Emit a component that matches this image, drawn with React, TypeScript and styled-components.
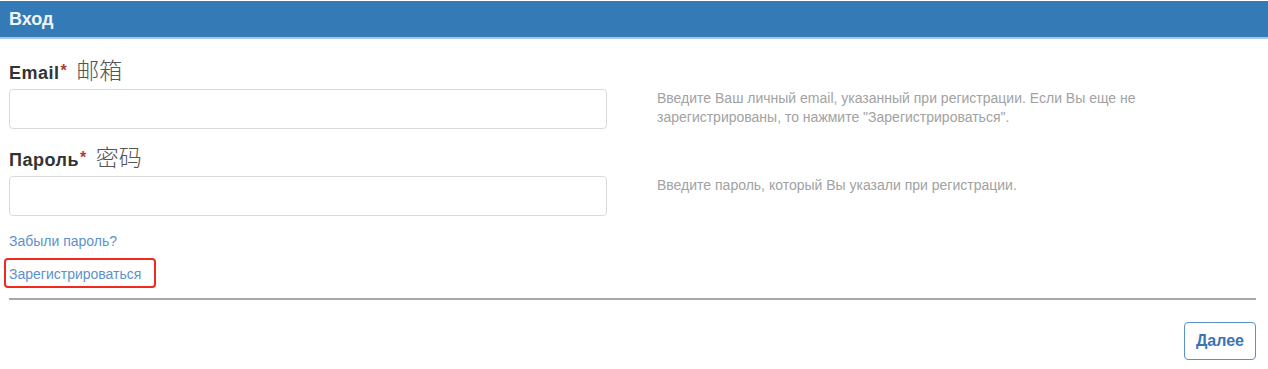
import React from "react";
import styled, { createGlobalStyle } from "styled-components";

const GlobalStyle = createGlobalStyle`
  html, body {
    margin: 0;
    padding: 0;
    background: #ffffff;
    font-family: "Liberation Sans", Arial, sans-serif;
  }
`;

const Page = styled.div`
  width: 1268px;
  height: 369px;
  padding-top: 1px;
  box-sizing: border-box;
  background: #fff;
`;

const Header = styled.div`
  height: 36px;
  background-color: #337ab7;
  border-bottom: 2px solid #a9c8e6;
  display: flex;
  align-items: center;
  padding: 0 9px;
`;

const HeaderTitle = styled.h2`
  margin: 0;
  color: #eef4fa;
  font-size: 18px;
  font-weight: 700;
  line-height: 20px;
`;

const Body = styled.div`
  padding: 20px 12px 0 9px;
`;

const FieldRow = styled.div<{ spacing?: string }>`
  display: grid;
  grid-template-columns: 598px 1fr;
  column-gap: 50px;
  margin-bottom: ${(props) => props.spacing || "0"};
`;

const FieldColumn = styled.div`
  display: flex;
  flex-direction: column;
`;

const Label = styled.label`
  display: block;
  height: 30px;
  line-height: 28px;
  color: #333;
  font-size: 18px;
  font-weight: 700;
  letter-spacing: 0.5px;
  white-space: nowrap;
`;

const Required = styled.span`
  color: #b23b37;
  font-size: 16px;
  line-height: 0;
  vertical-align: 3px;
  margin-left: 1px;
`;

const Translation = styled.span`
  margin-left: 9px;
  color: #555;
  font-family: "Noto Sans CJK SC", sans-serif;
  font-size: 23px;
  font-weight: 300;
  letter-spacing: 0;
  line-height: 0;
`;

const Input = styled.input`
  height: 40px;
  box-sizing: border-box;
  border: 1px solid #dadada;
  border-radius: 4px;
  padding: 6px 12px;
  font-size: 14px;
  outline: none;
`;

const HelpText = styled.p`
  margin: 30px 0 0;
  max-width: 500px;
  color: #a2a2a2;
  font-size: 14px;
  line-height: 19px;
`;

const LinkList = styled.div`
  display: flex;
  flex-direction: column;
  align-items: flex-start;
  margin-top: 15px;
  gap: 7px;
`;

const Link = styled.a<{ highlighted?: boolean }>`
  color: #5b92cb;
  font-size: 14px;
  line-height: 20px;
  text-decoration: none;
  padding: ${(props) => (props.highlighted ? "4px 13px 2px 3px" : "0")};
  margin-left: ${(props) => (props.highlighted ? "-5px" : "0")};
  border: ${(props) => (props.highlighted ? "2px solid #f02a1e" : "none")};
  border-radius: 4px;
`;

const Divider = styled.hr`
  margin: 10px 0 0;
  border: none;
  border-top: 2px solid #a8a8a8;
`;

const Footer = styled.div`
  display: flex;
  justify-content: flex-end;
  padding-top: 22px;
`;

const NextButton = styled.button`
  height: 38px;
  width: 72px;
  border: 1px solid #5a91cc;
  border-radius: 4px;
  background: #fff;
  color: #3a74b4;
  font-family: "Liberation Sans", Arial, sans-serif;
  font-size: 16px;
  font-weight: 700;
  cursor: pointer;
`;

export default function App() {
  return (
    <Page>
      <GlobalStyle />
      <Header>
        <HeaderTitle>Вход</HeaderTitle>
      </Header>
      <Body>
        <FieldRow spacing="17px">
          <FieldColumn>
            <Label>
              Email<Required>*</Required>
              <Translation>邮箱</Translation>
            </Label>
            <Input type="email" />
          </FieldColumn>
          <HelpText>
            Введите Ваш личный email, указанный при регистрации. Если Вы еще не
            зарегистрированы, то нажмите "Зарегистрироваться".
          </HelpText>
        </FieldRow>
        <FieldRow>
          <FieldColumn>
            <Label>
              Пароль<Required>*</Required>
              <Translation>密码</Translation>
            </Label>
            <Input type="password" />
          </FieldColumn>
          <HelpText>Введите пароль, который Вы указали при регистрации.</HelpText>
        </FieldRow>
        <LinkList>
          <Link href="#">Забыли пароль?</Link>
          <Link href="#" highlighted>
            Зарегистрироваться
          </Link>
        </LinkList>
        <Divider />
        <Footer>
          <NextButton>Далее</NextButton>
        </Footer>
      </Body>
    </Page>
  );
}
